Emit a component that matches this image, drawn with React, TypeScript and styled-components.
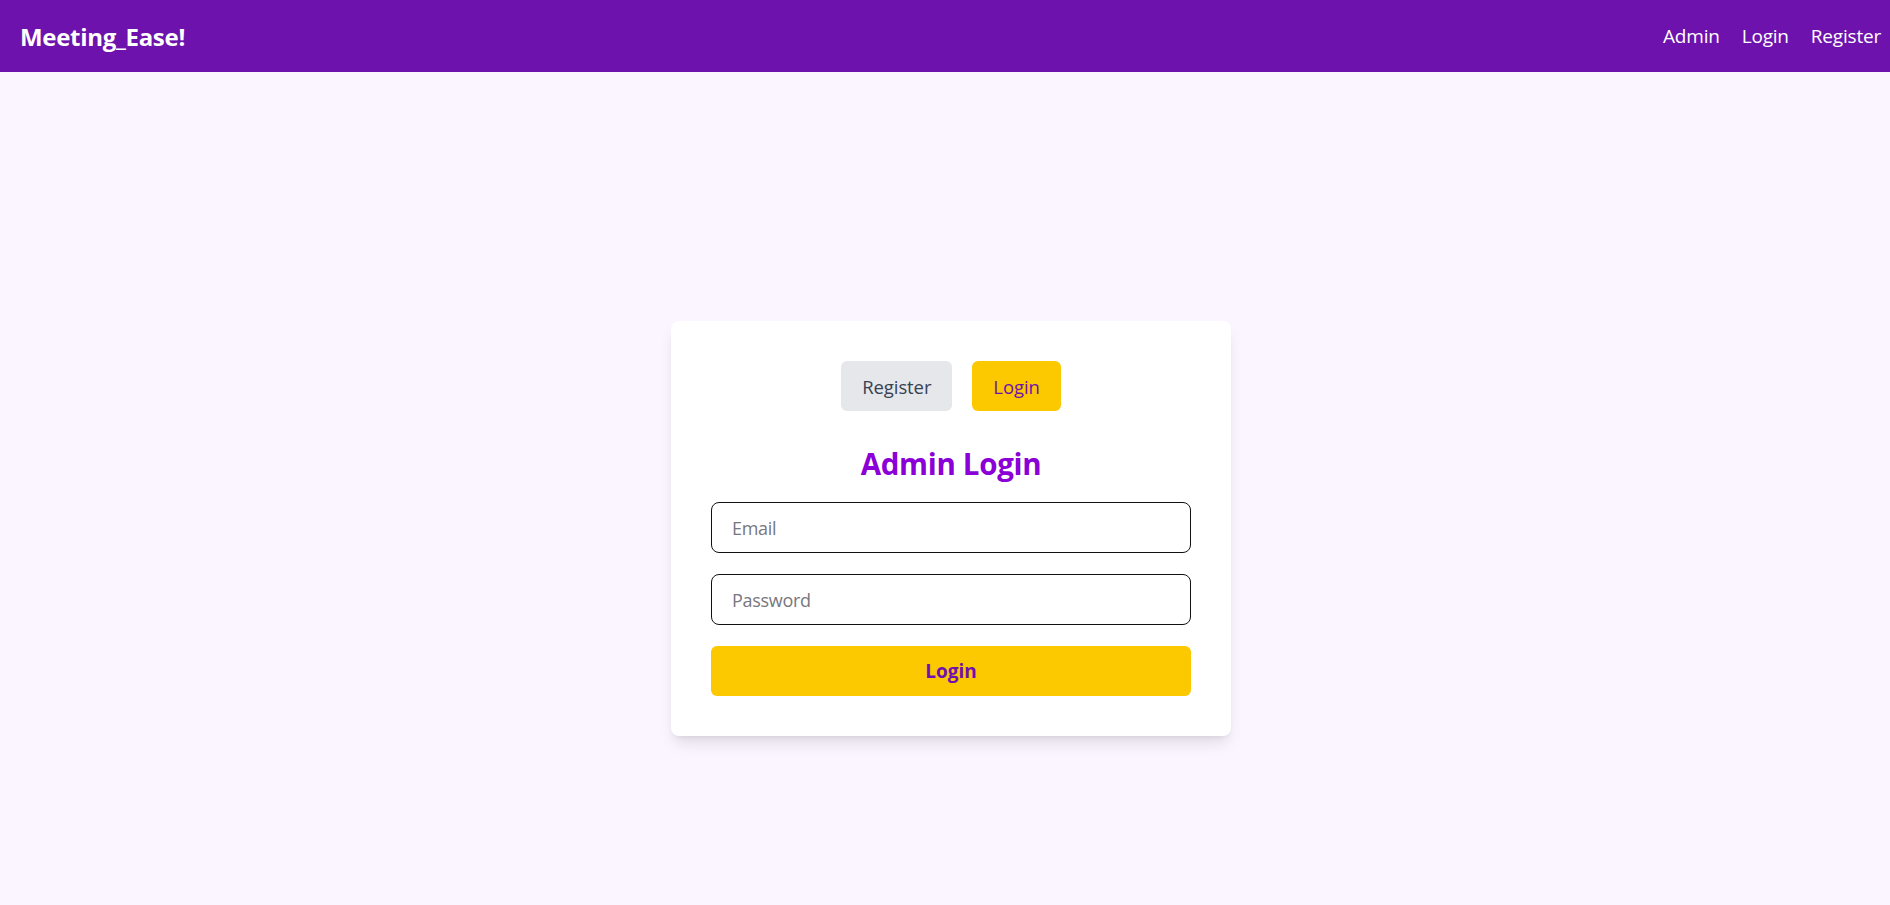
import React from "react";
import styled, { createGlobalStyle } from "styled-components";

const Global = createGlobalStyle`
  html, body { margin: 0; padding: 0; }
  body {
    background: #faf5ff;
    font-family: "Open Sans", "Noto Sans", sans-serif;
    overflow: hidden;
  }
  * { box-sizing: border-box; }
`;

const Header = styled.header`
  height: 72px;
  background: #6e12ad;
  display: flex;
  align-items: center;
  justify-content: space-between;
  padding: 0 9px 0 20px;
`;

const Logo = styled.div`
  color: #fff;
  font-weight: 700;
  font-size: 24px;
  letter-spacing: -0.3px;
`;

const Nav = styled.nav`
  display: flex;
  align-items: center;
  gap: 22px;
`;

const NavLink = styled.a`
  color: #fff;
  font-size: 19px;
  text-decoration: none;
  letter-spacing: -0.2px;
  cursor: pointer;
`;

const Main = styled.main`
  height: calc(100vh - 72px);
  display: flex;
  align-items: center;
  justify-content: center;
  padding: 80px 0 0 12px;
`;

const Card = styled.div`
  width: 560px;
  background: #fff;
  border-radius: 8px;
  padding: 40px;
  box-shadow: 0 10px 15px -3px rgba(0, 0, 0, 0.1), 0 4px 6px -4px rgba(0, 0, 0, 0.1);
`;

const Tabs = styled.div`
  display: flex;
  justify-content: center;
  gap: 20px;
`;

const TabButton = styled.button<{ $active?: boolean }>`
  height: 50px;
  padding: 0 21px;
  border: none;
  border-radius: 6px;
  font-family: inherit;
  font-size: 18.5px;
  font-weight: 500;
  letter-spacing: -0.1px;
  background: ${(p) => (p.$active ? "#fcc800" : "#e5e7eb")};
  color: ${(p) => (p.$active ? "#7010b0" : "#374151")};
  cursor: pointer;
`;

const Title = styled.h2`
  margin: 35px 0 20px;
  text-align: center;
  font-size: 29.5px;
  line-height: 36px;
  font-weight: 700;
  color: #8a00d6;
  letter-spacing: -0.3px;
`;

const Form = styled.form`
  display: flex;
  flex-direction: column;
  gap: 21px;
`;

const Input = styled.input`
  height: 51px;
  width: 100%;
  padding: 0 20px;
  border: 1px solid #111;
  border-radius: 8px;
  font-family: inherit;
  font-size: 18px;
  letter-spacing: -0.3px;
  color: #111;
  outline: none;
  &::placeholder { color: #777780; }
`;

const Submit = styled.button`
  height: 50px;
  width: 100%;
  border: none;
  border-radius: 6px;
  background: #fcc800;
  color: #7010b0;
  font-family: inherit;
  font-size: 19px;
  font-weight: 700;
  cursor: pointer;
`;

export default function App() {
  return (
    <>
      <Global />
      <Header>
        <Logo>Meeting_Ease!</Logo>
        <Nav>
          <NavLink>Admin</NavLink>
          <NavLink>Login</NavLink>
          <NavLink>Register</NavLink>
        </Nav>
      </Header>
      <Main>
        <Card>
          <Tabs>
            <TabButton>Register</TabButton>
            <TabButton $active>Login</TabButton>
          </Tabs>
          <Title>Admin Login</Title>
          <Form onSubmit={(e) => e.preventDefault()}>
            <Input type="email" placeholder="Email" />
            <Input type="password" placeholder="Password" />
            <Submit type="submit">Login</Submit>
          </Form>
        </Card>
      </Main>
    </>
  );
}
